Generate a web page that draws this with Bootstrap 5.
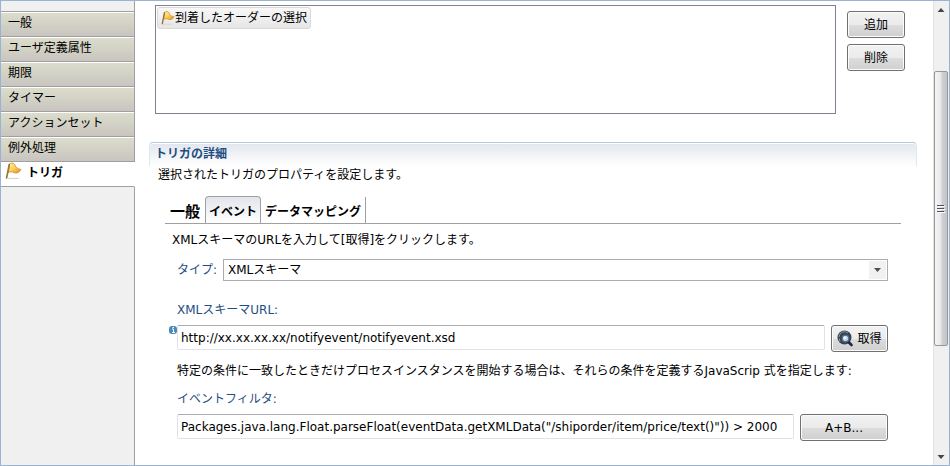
<!DOCTYPE html>
<html lang="ja">
<head>
<meta charset="utf-8">
<meta name="viewport" content="width=device-width, initial-scale=1">
<title>トリガ</title>
<link href="https://cdn.jsdelivr.net/npm/bootstrap@5.3.0/dist/css/bootstrap.min.css" rel="stylesheet">
<style>
body{font-family:"DejaVu Sans","Noto Sans CJK JP",sans-serif;font-size:12px;line-height:18px;color:#000;background:#fff}
.window{min-height:100vh;border:1px solid #99b4d1}
.side{width:134px}
.side-edge{background:#f0f0f0;border-right:1px solid #a0a0a0}
.side-top{height:10px}
.side-tabs{border-top:1px solid #a0a0a0}
.side-tab{height:25px;padding:0 7px;color:#000;text-decoration:none;border-bottom:1px solid #a0a0a0;border-right:1px solid #a0a0a0;background:linear-gradient(#dcddcc,#d3d3c6 45%,#c9c4c0);box-shadow:inset 0 1px #fff;line-height:22px}
.side-tab.current{background:#fff;border-right-color:#fff;font-weight:700;padding:0 4px;gap:5px}
.main{padding:4px 16px 0 14px;min-width:0}
.triggers{height:109px;border:1px solid #828190;padding:1px;margin-left:6px;min-width:0}
.trigger{height:22px;padding:0 3px;border:1px solid #d9d9d9;border-radius:3px;background:linear-gradient(#f8f8f8,#e6e6e6);color:#000}
.tool{height:27px;border:1px solid #707070;border-radius:3px;background:linear-gradient(#f2f2f2,#ebebeb 50%,#dddddd 51%,#cfcfcf);box-shadow:inset 0 0 0 1px #fcfcfc;padding:0 4px;color:#000}
.tool-col{width:58px;gap:6px;padding-top:6px;margin:0 12px 0 11px}
.detail{margin-top:28px}
.detail-head{height:24px;border:1px solid;border-width:1px 1px 0;border-color:#b4c7dc #dfe7f0;border-radius:4px 4px 0 0;background:linear-gradient(#e1e6ee,#fff);box-shadow:inset 0 1px #fff;padding:2px 5px;font-size:12px;line-height:18px;font-weight:700;color:#1f4e7f}
.detail-text{padding:0 9px}
.detail-body{padding:0 16px}
.tab-row{border-bottom:1px solid #a0a0a0;height:27px;margin-top:13px}
.tab-row button{border:0;background:none;padding:3px 4px 0;height:26px;font-size:12px;font-weight:700;color:#000}
.tab-row .wide-tab{font-size:15px;padding:3px 5px 0}
.tab-row .on{border:1px solid #a0a0a0;border-bottom:0;border-radius:4px 4px 0 0;background:linear-gradient(#e2e5ec,#fff);height:27px;padding:3px 3px 0}
.tab-row .last-tab{border-right:1px solid #a0a0a0}
.guide{padding-left:7px;margin-top:7px}
.fields{padding:0 13px 0 12px}
.caption{color:#1f4e7f}
.field{height:25px;border:1px solid #e2e3ea;border-top-color:#abadb3;border-radius:2px;padding:0 3px;color:#000;min-width:0}
.kind-row{gap:6px;margin-top:10px}
.kind{height:22px;border:1px solid #abadb3;border-radius:0;background:#fff;padding:0 4px;color:#000;appearance:none;width:100%}
.kind-arrow{position:absolute;right:2px;top:2px;width:17px;height:18px;background:#f1f1f1;pointer-events:none}
.info{margin-left:-8px}
.url-label{margin-top:20px}
.url-row,.filter-row{margin-top:6px;gap:6px}
.note{margin-top:10px}
.filter-label{margin-top:10px}
.fetch{width:57px;gap:3px}
.editor{width:88px}
.bar{width:16px;background:#f0f0f0;border-left:1px solid #e3e3e3;padding-right:1px}
.bar-end{height:17px}
.bar-above{flex:53 0 0}
.bar-thumb{flex:275 0 0;border:1px solid #979797;border-radius:2px;background:linear-gradient(90deg,#f5f5f5,#e9e9eb 45%,#cfd0d3 60%,#c3c4c8)}
.bar-below{flex:102 0 0}
</style>
</head>
<body>
<svg class="position-absolute" width="0" height="0" aria-hidden="true">
<linearGradient id="gold" x2="1" y2="1"><stop stop-color="#fff0ae"/><stop offset=".5" stop-color="#fbcf55"/><stop offset="1" stop-color="#d8901e"/></linearGradient>
<symbol id="flag" viewBox="0 0 16 16"><path d="M3 15h10" stroke="#d8d2c6" stroke-width="1"/><path d="M4 1.500C5.500 0 8.500.2 9.500 2.500c.6 2.200 2 3.500 5.500 4-1.500 3-4 4-6.500 3C6.500 8.500 5 8.500 3 9.500z" fill="url(#gold)" stroke="#c98f2c" stroke-width=".8"/><path d="M4 2 1.500 14.500" stroke="#9c7440" stroke-width="1.600" stroke-linecap="round"/></symbol>
</svg>
<div class="window d-flex">
  <nav class="side d-flex flex-column flex-shrink-0">
    <div class="side-edge side-top"></div>
    <div class="side-tabs d-flex flex-column">
      <a class="side-tab" href="#">一般</a>
      <a class="side-tab" href="#">ユーザ定義属性</a>
      <a class="side-tab" href="#">期限</a>
      <a class="side-tab" href="#">タイマー</a>
      <a class="side-tab" href="#">アクションセット</a>
      <a class="side-tab" href="#">例外処理</a>
      <a class="side-tab current d-flex" href="#"><svg width="17" height="18"><use href="#flag"/></svg>トリガ</a>
    </div>
    <div class="side-edge flex-grow-1"></div>
  </nav>
  <main class="main flex-grow-1">
    <div class="d-flex">
      <div class="triggers flex-grow-1">
        <button type="button" class="trigger d-inline-flex align-items-center"><svg width="14" height="14"><use href="#flag"/></svg>到着したオーダーの選択</button>
      </div>
      <div class="tool-col d-flex flex-column flex-shrink-0">
        <button type="button" class="tool">追加</button>
        <button type="button" class="tool">削除</button>
      </div>
    </div>
    <section class="detail">
      <h2 class="detail-head mb-0">トリガの詳細</h2>
      <p class="detail-text mb-0">選択されたトリガのプロパティを設定します。</p>
      <div class="detail-body">
        <div class="tab-row d-flex align-items-end" role="tablist">
          <button type="button" role="tab" class="wide-tab">一般</button>
          <button type="button" role="tab" class="on" aria-selected="true">イベント</button>
          <button type="button" role="tab" class="last-tab">データマッピング</button>
        </div>
        <p class="guide mb-0">XMLスキーマのURLを入力して[取得]をクリックします。</p>
        <form class="fields">
          <div class="kind-row d-flex align-items-center">
            <label class="caption" for="kind">タイプ:</label>
            <div class="position-relative flex-grow-1">
              <select id="kind" class="kind d-block"><option>XMLスキーマ</option></select>
              <svg class="kind-arrow" viewBox="0 0 17 18"><path d="M5 7h7L8.500 11z" fill="#505050"/></svg>
            </div>
          </div>
          <label class="caption url-label d-block" for="url">XMLスキーマURL:</label>
          <div class="url-row d-flex">
            <div class="d-flex flex-grow-1">
              <svg class="info flex-shrink-0" width="8" height="9" viewBox="0 0 8 9"><rect y="1" width="8" height="8" rx="3" fill="#4a8ab8"/><path d="M3 4h1.500v3M3 7.500h3M3.500 2.500h1.500" stroke="#fff" fill="none"/></svg>
              <input id="url" type="text" class="field flex-grow-1" value="http://xx.xx.xx.xx/notifyevent/notifyevent.xsd">
            </div>
            <button type="button" class="tool fetch d-flex align-items-center justify-content-center"><svg width="17" height="17" viewBox="0 0 17 17"><circle cx="7.500" cy="7.500" r="7" fill="#384350"/><path d="M2 7a5.500 5.500 0 0 1 9-4M3 11.500a6 6 0 0 1-.5-3" stroke="#8b9a9a" fill="none"/><path d="m10.500 11 4 4" stroke="#1e2740" stroke-width="2.600" stroke-linecap="round"/><circle cx="8.500" cy="8.500" r="3.300" fill="#b9cfe6" stroke="#53698c" stroke-width="1.200"/><circle cx="8" cy="8" r="1.400" fill="#f4faff"/></svg>取得</button>
          </div>
          <p class="note mb-0">特定の条件に一致したときだけプロセスインスタンスを開始する場合は、それらの条件を定義するJavaScrip 式を指定します:</p>
          <label class="caption filter-label d-block" for="filter">イベントフィルタ:</label>
          <div class="filter-row d-flex">
            <input id="filter" type="text" class="field flex-grow-1" value="Packages.java.lang.Float.parseFloat(eventData.getXMLData(&quot;/shiporder/item/price/text()&quot;)) &gt; 2000">
            <button type="button" class="tool editor">A+B...</button>
          </div>
        </form>
      </div>
    </section>
  </main>
  <div class="bar d-flex flex-column flex-shrink-0">
    <svg class="bar-end" viewBox="0 0 14 17"><path d="M3.500 11h7L7 7z" fill="#454545"/></svg>
    <div class="bar-above"></div>
    <div class="bar-thumb d-flex align-items-center justify-content-center"><svg width="8" height="9"><path d="M0 1.500h7M0 4.500h7M0 7.500h7" stroke="#4b5260"/><path d="M1 2.500h7M1 5.500h7M1 8.500h7" stroke="#fff"/></svg></div>
    <div class="bar-below"></div>
    <svg class="bar-end" viewBox="0 0 14 17"><path d="M3.500 7h7L7 11z" fill="#454545"/></svg>
  </div>
</div>
<script src="https://cdn.jsdelivr.net/npm/bootstrap@5.3.0/dist/js/bootstrap.bundle.min.js"></script>
</body>
</html>
